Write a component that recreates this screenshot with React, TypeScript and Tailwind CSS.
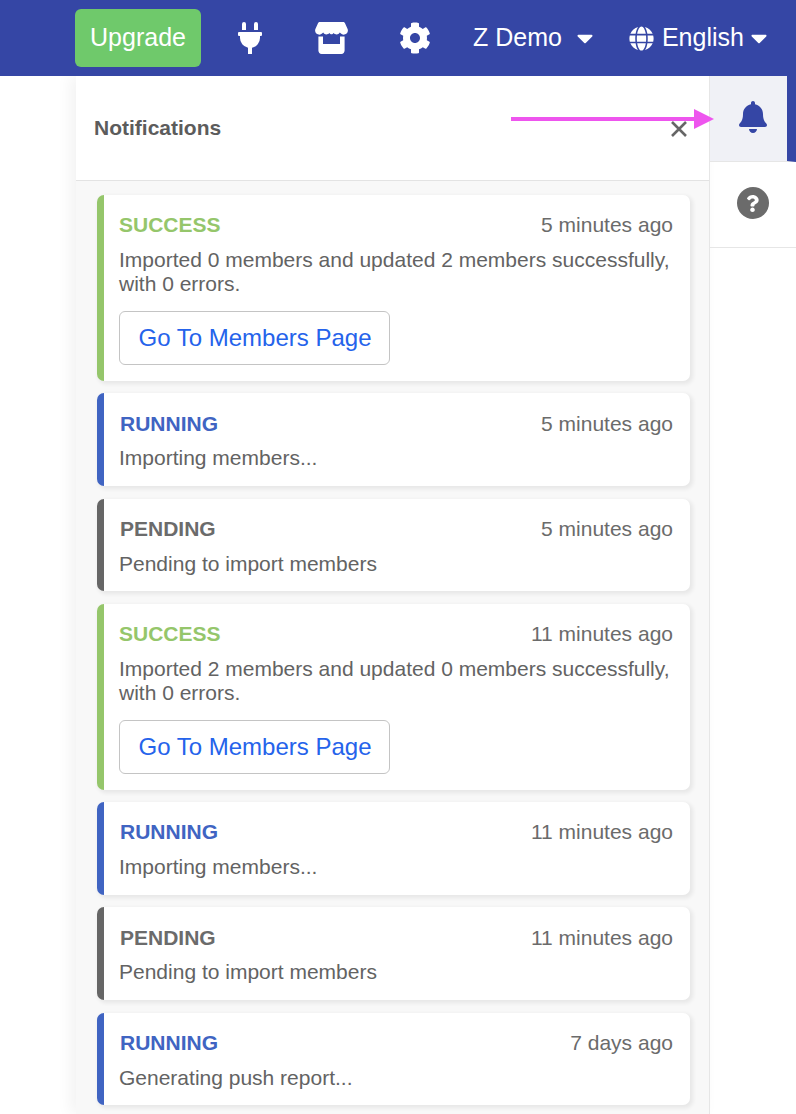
import { FaBell, FaCaretDown, FaCog, FaGlobe, FaPlug, FaQuestion } from "react-icons/fa"

type Status = "SUCCESS" | "RUNNING" | "PENDING"

type Notice = {
  status: Status
  time: string
  text: string
  link?: boolean
}

const notices: Notice[] = [
  { status: "SUCCESS", time: "5 minutes ago", text: "Imported 0 members and updated 2 members successfully, with 0 errors.", link: true },
  { status: "RUNNING", time: "5 minutes ago", text: "Importing members..." },
  { status: "PENDING", time: "5 minutes ago", text: "Pending to import members" },
  { status: "SUCCESS", time: "11 minutes ago", text: "Imported 2 members and updated 0 members successfully, with 0 errors.", link: true },
  { status: "RUNNING", time: "11 minutes ago", text: "Importing members..." },
  { status: "PENDING", time: "11 minutes ago", text: "Pending to import members" },
  { status: "RUNNING", time: "7 days ago", text: "Generating push report..." },
]

const borderColors: Record<Status, string> = {
  SUCCESS: "border-l-[#95c66b]",
  RUNNING: "border-l-[#4064c2]",
  PENDING: "border-l-[#666666]",
}

const titleColors: Record<Status, string> = {
  SUCCESS: "text-[#95c66b] pl-0",
  RUNNING: "text-[#4064c2] pl-px",
  PENDING: "text-[#6b6b6b] pl-px",
}

function StoreIcon() {
  return (
    <svg className="ml-[49px] shrink-0" width="33" height="32" viewBox="0 0 33 32" fill="currentColor">
      <path d="M5 0H28C29 0 29.6 .5 30 1.2L32.6 7C33.6 9.5 32 12.4 29.4 12.6C27.6 12.8 26 12 24.8 10.6C23.6 12.8 20.4 13.2 18.6 11C17.6 12.8 15.4 12.8 14.4 11C12.6 13.2 9.4 12.8 8.2 10.6C7 12 5.4 12.8 3.6 12.6C1 12.4 -.6 9.5 .4 7L3 1.2C3.4 .5 4 0 5 0Z" />
      <path d="M3.4 14.4H8V22H25V14.4H29.6V28.6C29.6 30.5 28.2 32 26.4 32H6.6C4.8 32 3.4 30.5 3.4 28.6Z" />
    </svg>
  )
}

function NoticeCard({ notice }: { notice: Notice }) {
  return (
    <div
      className={`rounded-[7px] border-l-[7px] bg-white pl-[15px] pr-[17px] pt-[17px] pb-[15.7px] shadow-[2px_2px_4px_1px_rgba(0,0,0,0.07)] ${borderColors[notice.status]}`}
    >
      <div className="flex h-[26px] items-center justify-between">
        <span className={`text-[21px] font-bold ${titleColors[notice.status]}`}>{notice.status}</span>
        <span className="text-[21px] text-[#6b6b6b]">{notice.time}</span>
      </div>
      <p className="mt-[10px] text-[21px] leading-[24px] text-[#636363]">{notice.text}</p>
      {notice.link && (
        <button className="mt-[15px] block h-[54px] w-[271px] rounded-[6px] border border-[#c4c4c4] bg-white pl-px text-[24px] text-[#2563eb]">
          Go To Members Page
        </button>
      )}
    </div>
  )
}

export default function App() {
  return (
    <div className="relative h-[1114px] w-[796px] overflow-hidden bg-white font-['Liberation_Sans',Arial,sans-serif]">
      {/* Top bar */}
      <header className="relative z-10 flex h-[76px] items-center bg-[#3546a5] pl-[75px] text-white">
        <button className="h-[58px] w-[126px] shrink-0 rounded-[6px] bg-[#6fc96b] text-[25px] text-white">Upgrade</button>
        <FaPlug className="ml-[33px] shrink-0 text-[32px]" />
        <StoreIcon />
        <FaCog className="ml-[51px] shrink-0 text-[32px]" />
        <span className="ml-[42px] shrink-0 text-[25px]">Z Demo</span>
        <FaCaretDown className="ml-[10px] shrink-0 text-[26px]" />
        <FaGlobe className="ml-[31px] shrink-0 text-[25px]" />
        <span className="ml-[8px] shrink-0 text-[25px]">English</span>
        <FaCaretDown className="ml-[2px] shrink-0 text-[26px]" />
      </header>

      <div className="flex h-[1038px]">
        {/* Notifications panel */}
        <section className="ml-[76px] w-[634px] border-r border-[#e6e6e6] bg-[#f8f8f8] shadow-[-6px_0_14px_rgba(0,0,0,0.05)]">
          <div className="flex h-[105px] items-center justify-between border-b border-[#e3e3e3] bg-white pl-[18px] pr-[22px]">
            <h2 className="-mt-[1px] text-[21px] font-bold text-[#5c5c5c]">Notifications</h2>
            <svg className="mt-[1px]" width="16" height="16" viewBox="0 0 16 16" stroke="#666666" strokeWidth="2.6">
              <path d="M1 1L15 15M15 1L1 15" />
            </svg>
          </div>
          <div className="flex flex-col gap-[12.6px] pl-[21px] pr-[19px] pt-[14px]">
            {notices.map((notice, i) => (
              <NoticeCard key={i} notice={notice} />
            ))}
          </div>
        </section>

        {/* Right rail */}
        <aside className="flex-1">
          <div className="flex h-[86px] items-center justify-center border-b border-r-[9px] border-[#e6e6e6] border-r-[#3546a5] bg-[#f0f1f6] pl-[9px] text-[#3546a5]">
            <FaBell className="-mt-[3px] text-[32px]" />
          </div>
          <div className="flex h-[86px] items-center justify-center border-b border-[#e6e6e6]">
            <div className="-mt-[3px] ml-[-1px] flex h-[32px] w-[32px] items-center justify-center rounded-full bg-[#6b6b6b] text-white">
              <FaQuestion className="text-[17px]" />
            </div>
          </div>
        </aside>
      </div>

      {/* Annotation arrow */}
      <svg className="absolute left-[511px] top-[107px] z-20" width="204" height="24" viewBox="0 0 204 24">
        <rect x="0" y="10" width="186" height="4" fill="#ee55ee" />
        <polygon points="183,2 203,12 183,22" fill="#ee55ee" />
      </svg>
    </div>
  )
}
